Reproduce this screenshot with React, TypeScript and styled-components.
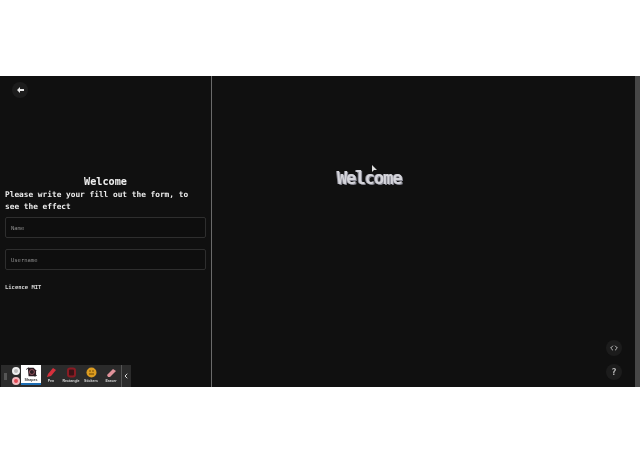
import React from 'react';
import styled, { createGlobalStyle } from 'styled-components';
import { ChevronLeft, Code } from 'lucide-react';

const Global = createGlobalStyle`
  html, body { margin: 0; padding: 0; background: #fff; overflow: hidden; }
  * { box-sizing: border-box; }
`;

const Page = styled.div`
  width: 640px;
  height: 464px;
  padding-top: 76px;
  font-family: "DejaVu Sans Mono", "Liberation Mono", monospace;
`;

const Stage = styled.div`
  position: relative;
  display: flex;
  height: 311px;
  background: #101010;
  filter: blur(0.3px);
`;

const Side = styled.aside`
  width: 212px;
  flex: none;
  display: flex;
  flex-direction: column;
  padding: 6px 5px 0;
  border-right: 1px solid #6a6a6a;
`;

const Round = styled.button`
  width: 16px;
  height: 16px;
  margin-left: 7px;
  border: 0;
  padding: 0;
  border-radius: 50%;
  background: #1c1c1c;
  color: #e8e8e8;
  display: flex;
  align-items: center;
  justify-content: center;
  font-family: inherit;
  font-weight: 700;
`;

const Title = styled.h1`
  margin: 76px 0 0;
  text-align: center;
  font-size: 10.2px;
  line-height: 15px;
  font-weight: 700;
  color: #f0f0f0;
`;

const Lead = styled.p`
  margin: 0 0 4px;
  font-size: 7.8px;
  line-height: 12px;
  font-weight: 700;
  color: #ececec;
`;

const Field = styled.input`
  display: block;
  width: 201px;
  height: 21px;
  padding: 0 5px;
  margin-bottom: 11px;
  background: #0e0e0e;
  border: 1px solid #2e2e2e;
  border-radius: 2px;
  font-family: inherit;
  font-size: 5.5px;
  &::placeholder { color: #8a8a8a; }
`;

const Licence = styled.span`
  margin-top: 2px;
  font-size: 5.5px;
  line-height: 8px;
  font-weight: 700;
  color: #dcdcdc;
`;

const Canvas = styled.main`
  flex: 1;
  position: relative;
`;

const Effect = styled.div`
  position: absolute;
  left: 125px;
  top: 92px;
  font-size: 17px;
  line-height: 20px;
  font-weight: 700;
  letter-spacing: -1px;
  color: #d4d4da;
  text-shadow: 1px 1px 0 #85858f, -1px 0 0 #85858f;
`;

const Cursor = styled.svg`
  position: absolute;
  left: 160px;
  top: 89px;
`;

const Floating = styled(Round)<{ $top: number }>`
  position: absolute;
  right: 13px;
  top: ${p => p.$top}px;
  margin: 0;
  color: #bdbdbd;
  font-size: 9px;
`;

const Scrollbar = styled.div`
  width: 5px;
  flex: none;
  background: #474747;
`;

const Dock = styled.div`
  position: absolute;
  left: 1px;
  bottom: 0;
  width: 130px;
  height: 22px;
  display: flex;
  align-items: stretch;
  background: #2b2b2b;
`;

const Grip = styled.i`
  width: 3px;
  height: 7px;
  margin: 8px 4px 0 3px;
  background: #555;
`;

const Toggles = styled.div`
  width: 10px;
  display: flex;
  flex-direction: column;
  align-items: center;
  justify-content: center;
  gap: 2px;
`;

const Dot = styled.i<{ $red?: boolean }>`
  width: 8px;
  height: 8px;
  border-radius: 50%;
  background: ${p => (p.$red ? '#e24a55' : '#bdbdbd')};
  border: 2px solid ${p => (p.$red ? '#f0b8bd' : '#eeeeee')};
`;

const Tool = styled.div<{ $active?: boolean }>`
  width: 20px;
  display: flex;
  flex-direction: column;
  align-items: center;
  padding-top: 2px;
  background: ${p => (p.$active ? '#fff' : 'transparent')};
  color: ${p => (p.$active ? '#333' : '#d8d8d8')};
  border-bottom: ${p => (p.$active ? '2px solid #1f6fb5' : '0')};
  margin-bottom: ${p => (p.$active ? '2px' : '0')};
  font-family: "Liberation Sans", sans-serif;
  font-size: 3.6px;
  line-height: 5px;
  font-weight: 700;
  gap: 1px;
  white-space: nowrap;
`;

const Collapse = styled.div`
  width: 9px;
  border-left: 1px solid #555;
  color: #ddd;
  display: flex;
  align-items: center;
  justify-content: center;
`;

export default function App() {
  return (
    <Page>
      <Global />
      <Stage>
        <Side>
          <Round aria-label="Back">
            <svg width="7" height="6" viewBox="0 0 7 6"><path d="M0 3l3-3v2h4v2H3v2z" fill="#e8e8e8" /></svg>
          </Round>
          <Title>Welcome</Title>
          <Lead>Please write your fill out the form, to see the effect</Lead>
          <Field placeholder="Name" />
          <Field placeholder="Username" />
          <Licence>Licence MIT</Licence>
        </Side>
        <Canvas>
          <Effect>Welcome</Effect>
          <Cursor width="6" height="8" viewBox="0 0 6 8"><path d="M0 0v7l2-2h3z" fill="#ddd" /></Cursor>
          <Floating $top={264} aria-label="Code"><Code size={8} strokeWidth={3} /></Floating>
          <Floating $top={288} aria-label="Help">?</Floating>
        </Canvas>
        <Scrollbar />
        <Dock>
          <Grip />
          <Toggles><Dot /><Dot $red /></Toggles>
          <Tool $active>
            <svg width="13" height="12" viewBox="0 0 13 12">
              <path d="M2 1h7l3 3v7H3z" fill="#2a1c22" />
              <circle cx="7" cy="6" r="3" fill="none" stroke="#a8606a" strokeWidth="1" />
              <path d="M0 3l3-2M10 11l3-1" stroke="#333" strokeWidth="1" />
            </svg>
            Shapes
          </Tool>
          <Tool>
            <svg width="11" height="11" viewBox="0 0 11 11"><path d="M1 10l1-3 5-6 3 2-5 6z" fill="#d6303c" /></svg>
            Pen
          </Tool>
          <Tool>
            <svg width="11" height="11" viewBox="0 0 11 11"><rect x="2" y="1.5" width="7" height="8" rx="2" fill="#3a1216" stroke="#8a1c24" strokeWidth="2" /></svg>
            Rectangle
          </Tool>
          <Tool>
            <svg width="11" height="11" viewBox="0 0 11 11"><circle cx="5.5" cy="5.5" r="5" fill="#dc9c20" /><path d="M3 7h5" stroke="#6a4400" strokeWidth="1" /><circle cx="4" cy="4" r=".8" fill="#6a4400" /><circle cx="7" cy="4" r=".8" fill="#6a4400" /></svg>
            Stickers
          </Tool>
          <Tool>
            <svg width="11" height="11" viewBox="0 0 11 11"><path d="M1 8l6-6 3 2-6 6H2z" fill="#e0929a" /></svg>
            Eraser
          </Tool>
          <Collapse><ChevronLeft size={8} strokeWidth={3} /></Collapse>
        </Dock>
      </Stage>
    </Page>
  );
}
